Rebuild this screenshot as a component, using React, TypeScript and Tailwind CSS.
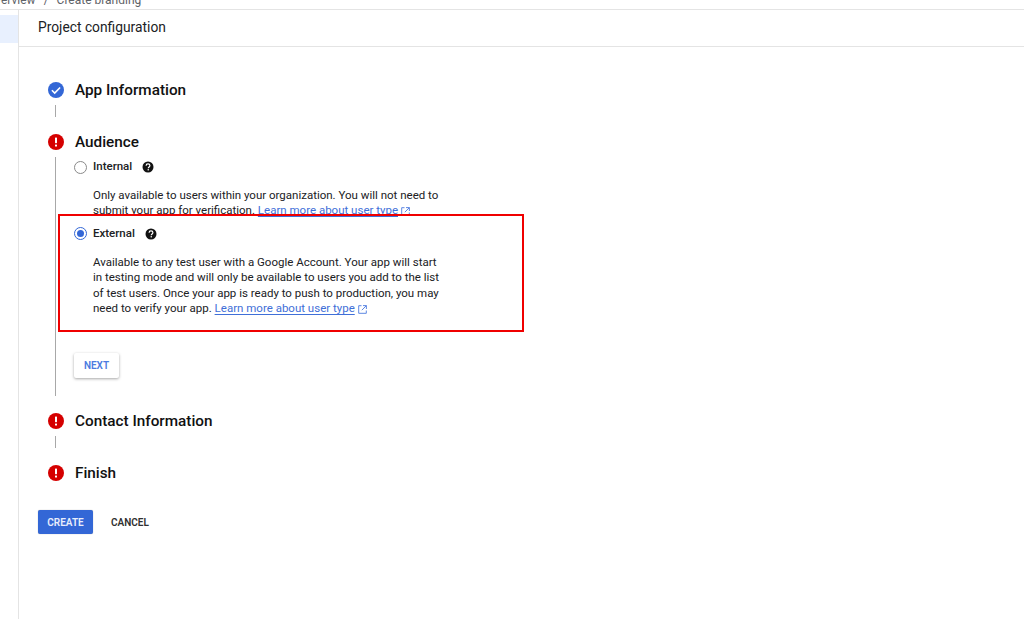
import React from 'react';

const font = { fontFamily: 'Roboto, sans-serif' };

function ErrorIcon() {
  return (
    <svg width="16" height="16" viewBox="0 0 16 16" className="shrink-0">
      <circle cx="8" cy="8" r="8" fill="#d50000" />
      <rect x="7" y="3.4" width="2" height="5.8" rx="0.6" fill="#fff" />
      <rect x="7" y="10.4" width="2" height="2" rx="0.5" fill="#fff" />
    </svg>
  );
}

function CheckIcon() {
  return (
    <svg width="16" height="16" viewBox="0 0 16 16" className="shrink-0">
      <circle cx="8" cy="8" r="8" fill="#3367d6" />
      <path d="M3.9 8.3l2.8 2.8 5.4-5.6" fill="none" stroke="#fff" strokeWidth="1.6" />
    </svg>
  );
}

function HelpIcon() {
  return (
    <svg width="12" height="12" viewBox="0 0 12 12" className="shrink-0">
      <circle cx="6" cy="6" r="5.5" fill="#111" />
      <path d="M4.1 4.7c0-1.1.9-1.8 1.9-1.8s1.9.7 1.9 1.7c0 1.3-1.6 1.4-1.6 2.6" fill="none" stroke="#fff" strokeWidth="1.2" />
      <rect x="5.6" y="8.1" width="1.3" height="1.3" fill="#fff" />
    </svg>
  );
}

function ExternalIcon() {
  return (
    <svg width="9" height="9" viewBox="0 0 9 9" className="ml-[3px] inline-block" fill="none" stroke="#4c7be0" strokeWidth="0.9">
      <path d="M3.5.7H.7v7.6h7.6V5.5" />
      <path d="M5 .6h3.4V4M8.3.7L3.8 5.2" />
    </svg>
  );
}

function LearnMore() {
  return (
    <>
      <span className="text-[#3f6fd8] underline decoration-[#3f6fd8] underline-offset-2">Learn more about user type</span>
      <ExternalIcon />
    </>
  );
}

function Step({ icon, title }: { icon: React.ReactNode; title: string }) {
  return (
    <div className="flex h-[16px] items-center gap-[11px]">
      {icon}
      <span className="text-[15.3px] font-medium text-[#111]">{title}</span>
    </div>
  );
}

function Connector() {
  return <div className="mt-[7px] mb-[17px] ml-[7px] h-[12px] w-px bg-[#a8a8a8]" />;
}

function RadioRow({ label, checked, gap }: { label: string; checked?: boolean; gap: string }) {
  return (
    <div className={`flex h-[14px] items-center ${gap}`}>
      <span className={`mr-[6px] flex h-[13px] w-[13px] items-center justify-center rounded-full border ${checked ? 'border-[#3367d6]' : 'border-[#8a8a8a]'}`}>
        {checked && <span className="h-[7px] w-[7px] rounded-full bg-[#3367d6]" />}
      </span>
      <span className="text-[11.5px] font-medium text-[#202124]">{label}</span>
      <HelpIcon />
    </div>
  );
}

export default function App() {
  return (
    <div className="relative h-[619px] w-[1024px] overflow-hidden bg-white" style={font}>
      <div className="h-[10px] overflow-hidden border-b border-[#e4e4e4]">
        <div className="-mt-[7px] -ml-[13px] flex gap-[8px] text-[12px] leading-[14px] text-[#5f6368]">
          <span>Overview</span>
          <span>/</span>
          <span>Create branding</span>
        </div>
      </div>
      <div className="flex h-[609px]">
        <aside className="w-[19px] shrink-0 border-r border-[#e4e4e4] pt-[5px]">
          <div className="h-[28px] bg-[#e8f0fe]" />
        </aside>
        <main className="flex-1">
          <header className="flex h-[37px] items-center border-b border-[#e4e4e4] pb-px pl-[19px] text-[13.8px] text-[#202124]">
            Project configuration
          </header>
          <div className="pt-[35px] pl-[29px]">
            <Step icon={<CheckIcon />} title="App Information" />
            <Connector />
            <Step icon={<ErrorIcon />} title="Audience" />
            <div className="mt-[7px] ml-[7px] h-[239px] border-l border-[#a8a8a8] pt-[3px] pl-[18px]">
              <RadioRow label="Internal" gap="[&>svg]:ml-[10px]" />
              <p className="mt-[14px] ml-[19px] w-[349px] text-[11.5px] leading-[15.4px] text-[#202124]">
                Only available to users within your organization. You will not need to submit your app for verification.{' '}
                <LearnMore />
              </p>
              <div className="mt-[8px]">
                <RadioRow label="External" checked gap="[&>svg]:ml-[10px]" />
              </div>
              <p className="mt-[14px] ml-[19px] w-[349px] text-[11.5px] leading-[15.4px] text-[#202124]">
                Available to any test user with a Google Account. Your app will start in testing mode and will only be available to users you add to the list of test users. Once your app is ready to push to production, you may need to verify your app.{' '}
                <LearnMore />
              </p>
              <button className="mt-[36.5px] flex h-[25px] w-[45px] items-center justify-center rounded-[2px] bg-white text-[10px] font-semibold text-[#4c7be0] shadow-[0_1px_3px_rgba(0,0,0,0.35)]">
                NEXT
              </button>
            </div>
            <div className="mt-[17px]">
              <Step icon={<ErrorIcon />} title="Contact Information" />
            </div>
            <Connector />
            <Step icon={<ErrorIcon />} title="Finish" />
          </div>
          <div className="mt-[29px] ml-[19px] flex items-center">
            <button className="h-[24px] w-[55px] rounded-[2px] bg-[#3367d6] text-[10px] font-semibold text-[#e8eefc] shadow-[0_0_1px_rgba(0,0,0,0.4)]">
              CREATE
            </button>
            <button className="ml-[18px] text-[10px] font-semibold text-[#303030]">CANCEL</button>
          </div>
        </main>
      </div>
      <div className="absolute top-[214px] left-[58px] h-[118px] w-[466px] border-[2px] border-[#f00000]" />
    </div>
  );
}
